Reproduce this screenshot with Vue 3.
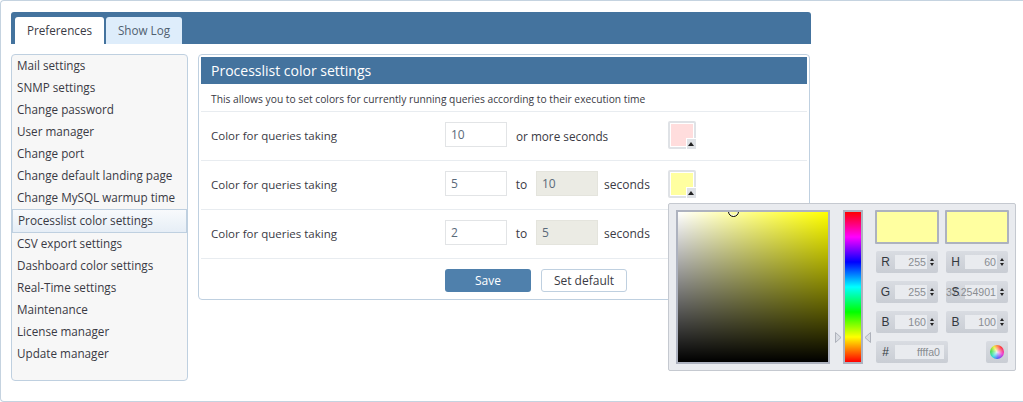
<script setup>
const menu = ['Mail settings','SNMP settings','Change password','User manager','Change port','Change default landing page','Change MySQL warmup time','Processlist color settings','CSV export settings','Dashboard color settings','Real-Time settings','Maintenance','License manager','Update manager']
const rows = [
  { a:'10', mid:'or more seconds', color:'#ffdddd' },
  { a:'5', b:'10', color:'#ffffa0' },
  { a:'2', b:'5', color:'#ffffa0', hidden:true },
]
const fields = [['R','255'],['H','60'],['G','255'],['S','37.254901'],['B','160'],['B','100']]
</script>

<template>
  <div class="page">
    <div class="tabbar">
      <div class="tab active">Preferences</div>
      <div class="tab">Show Log</div>
    </div>
    <div class="main">
      <ul class="side">
        <li v-for="m in menu" :key="m" :class="{ sel: m === 'Processlist color settings' }">{{ m }}</li>
      </ul>
      <div class="panel">
        <div class="title">Processlist color settings</div>
        <div class="desc">This allows you to set colors for currently running queries according to their execution time</div>
        <div v-for="(r,i) in rows" :key="i" class="row">
          <span class="lbl">Color for queries taking</span>
          <span class="inp">{{ r.a }}</span>
          <template v-if="r.mid"><span class="mid">{{ r.mid }}</span></template>
          <template v-else>
            <span class="to">to</span>
            <span class="inp dis">{{ r.b }}</span>
            <span class="sec">seconds</span>
          </template>
          <span v-if="!r.hidden" class="swatch">
            <i class="fill" :style="{ background: r.color }"></i>
            <b class="corner"><em></em></b>
          </span>
        </div>
        <div class="foot">
          <button class="save">Save</button>
          <button class="def">Set default</button>
        </div>
      </div>
    </div>

    <div class="picker">
      <div class="sv"><span class="ring"></span></div>
      <div class="hue-wrap">
        <svg class="arr l" width="7" height="11" viewBox="0 0 7 11"><polygon points="0.5,0.5 6,5.5 0.5,10.5" /></svg>
        <div class="hue"></div>
        <svg class="arr r" width="7" height="11" viewBox="0 0 7 11"><polygon points="6.5,0.5 1,5.5 6.5,10.5" /></svg>
      </div>
      <div class="right">
        <div class="prev"><i></i><i></i></div>
        <div class="grid">
          <div v-for="(f,i) in fields" :key="i" class="fld">
            <span class="k">{{ f[0] }}</span>
            <span class="v" :class="{ over: f[0]==='S' }"><span>{{ f[1] }}</span></span>
            <span class="spin"><s></s><s></s></span>
          </div>
          <div class="fld hex"><span class="k">#</span><span class="v">ffffa0</span></div>
          <div class="wheel-box"><span class="wheel"></span></div>
        </div>
      </div>
    </div>
  </div>
</template>

<style>
html, body { margin: 0; background: #fff; }
</style>

<style scoped>
.page {
  position: relative; box-sizing: border-box; width: 1023px; height: 402px;
  border: 1px solid #c5d3e0; border-right: 0; border-radius: 4px 0 0 4px;
  padding: 11px 0 0 10px; font: 12px/16px "Open Sans", sans-serif; color: #3a3a44; overflow: hidden;
}
.tabbar {
  width: 800px; height: 32px; box-sizing: border-box; background: #44739e; border-radius: 3px 3px 0 0;
  display: flex; align-items: flex-end; gap: 2px; padding-left: 4px;
}
.tab {
  width: 76px; height: 27px; line-height: 26px; box-sizing: border-box; background: #deedfb; color: #50606f;
  text-align: center; font-size: 11.7px; border-radius: 3px 3px 0 0;
}
.tab.active { width: 89px; background: #fff; color: #3a3a44; }
.main { display: flex; gap: 10px; margin-top: 10px; align-items: flex-start; }
.side {
  list-style: none; margin: 0; padding: 0; width: 177px; height: 327px; box-sizing: border-box;
  background: #f7f7f7; border: 1px solid #bfd0e0; border-radius: 4px; font-size: 11.7px;
}
.side li { height: 22px; line-height: 21px; padding-left: 5px; }
.side li.sel {
  height: 24px; line-height: 21px; padding-left: 5px; box-sizing: border-box; width: 175px;
  background: linear-gradient(#f8fafc, #e6eef6); border: 1px solid #bfd0e0; font-size: 11.8px;
}
.panel {
  width: 612px; height: 246px; box-sizing: border-box; background: #fff; border: 1px solid #bfd0e0;
  border-radius: 4px; padding: 2px;
}
.title {
  height: 27px; line-height: 27px; background: #44739e; color: #fff; font-size: 14px; padding-left: 10px;
}
.desc {
  height: 27px; line-height: 30px; font-size: 10.25px; padding-left: 10px; border-bottom: 1px solid #e8ecf0;
}
.row {
  height: 48px; border-bottom: 1px solid #e8ecf0; display: flex; align-items: center; padding-left: 10px;
}
.lbl { width: 234px; font-size: 11.5px; }
.inp {
  width: 62px; height: 25px; line-height: 23px; box-sizing: border-box; border: 1px solid #e2e4e6; padding-left: 5px;
  color: #5a6a7a; margin-top: -3px;
}
.inp.dis { background: #ebebe4; border-color: #e4e4dd; }
.mid { margin-left: 9px; width: 152px; font-size: 11.75px; }
.to { width: 29px; text-align: center; }
.sec { margin-left: 6px; width: 46px; white-space: nowrap; }
.swatch {
  position: relative; width: 28px; height: 28px; box-sizing: border-box; background: #dfe2e6; border-radius: 2px;
  margin: -2px 0 0 18px; padding: 2px;
}
.mid + .swatch { margin-left: 0; }
.fill { display: block; width: 24px; height: 24px; box-sizing: border-box; border: 1px solid #fff; }
.corner {
  position: absolute; right: 0; bottom: 0; width: 10px; height: 11px; box-sizing: border-box; background: #dfe2e6;
  border-left: 1px solid #fff; border-top: 1px solid #fff;
}
.corner em {
  position: absolute; left: 1px; top: 3px; border: 3.5px solid transparent; border-top: 0; border-bottom: 4px solid #222;
}
.foot { height: 41px; box-sizing: border-box; display: flex; align-items: center; padding: 2px 0 0 244px; gap: 10px; }
button { font: inherit; box-sizing: border-box; height: 23px; padding: 0; border-radius: 3px; }
.save { width: 86px; background: #4f80ac; border: 0; color: #fff; }
.def { width: 86px; background: #fff; border: 1px solid #bfd0e0; color: #3a3a44; }

.picker {
  position: absolute; left: 667px; top: 202px; width: 348px; height: 168px; box-sizing: border-box;
  background: #e9ebef; border: 1px solid #c5c9d0; border-radius: 2px; display: flex; padding: 6px 0 0 7px;
  font-family: "Liberation Sans", sans-serif; font-size: 10.6px;
}
.sv {
  position: relative; width: 154px; height: 154px; box-sizing: border-box; border: 2px solid #adb2bf; overflow: hidden;
  background: linear-gradient(to top, #000, transparent), linear-gradient(to right, #fff, #ffff00);
}
.ring {
  position: absolute; left: 50px; top: -6px; width: 9px; height: 9px; border: 1px solid #000; border-radius: 50%;
  box-shadow: inset 0 0 0 1px #fff;
}
.hue-wrap { position: relative; margin-left: 13px; }
.hue {
  width: 20px; height: 154px; box-sizing: border-box; border: 2px solid #adb2bf;
  background: linear-gradient(#f00 0, #f0f 16.67%, #00f 33.33%, #0ff 50%, #0f0 66.67%, #ff0 83.33%, #f00 100%);
}
.arr { position: absolute; top: 122px; }
.arr polygon { fill: #d9dce2; stroke: #aeb2bb; stroke-width: 1; }
.arr.l { left: -8px; }
.arr.r { right: -8px; }
.right { margin-left: 12px; width: 134px; }
.prev { display: flex; gap: 6px; }
.prev i { width: 64px; height: 34px; box-sizing: border-box; border: 2px solid #adb2bf; background: #ffffa0; border-radius: 1px; }
.grid { display: grid; grid-template-columns: 62px 62px; column-gap: 8px; row-gap: 8px; margin: 7px 0 0 1px; }
.fld {
  position: relative; height: 22px; width: 62px; box-sizing: border-box; background: linear-gradient(#d9dce2, #c9cdd4);
  border-radius: 2px; display: flex; align-items: center;
}
.k { position: relative; z-index: 1; width: 19px; text-align: center; color: #33393f; font-size: 12px; }
.v {
  width: 32px; height: 14px; line-height: 14px; background: #e9ebef; text-align: right; color: #8a8d92; box-sizing: border-box; padding-right: 1px;
}
.v.over { display: flex; justify-content: flex-end; white-space: nowrap; }
.spin { display: flex; flex-direction: column; gap: 2px; margin-left: 3px; }
.spin s { display: block; width: 0; height: 0; border: 2px solid transparent; border-bottom: 3px solid #222; border-top: 0; }
.spin s + s { border-top: 3px solid #222; border-bottom: 0; }
.hex { width: 72px; }
.hex .v { width: 49px; padding-right: 4px; }
.wheel-box {
  justify-self: end; width: 22px; height: 22px; background: linear-gradient(#d9dce2, #c9cdd4); border-radius: 2px;
  display: flex; align-items: center; justify-content: center;
}
.wheel {
  width: 14px; height: 14px; border-radius: 50%;
  background: radial-gradient(circle, rgba(255,255,255,.85) 0, rgba(255,255,255,0) 65%), conic-gradient(#f84, #f33 40deg, #e3c 110deg, #55f 170deg, #3dd 220deg, #4d4 280deg, #ee3 330deg, #f84);
}
</style>
